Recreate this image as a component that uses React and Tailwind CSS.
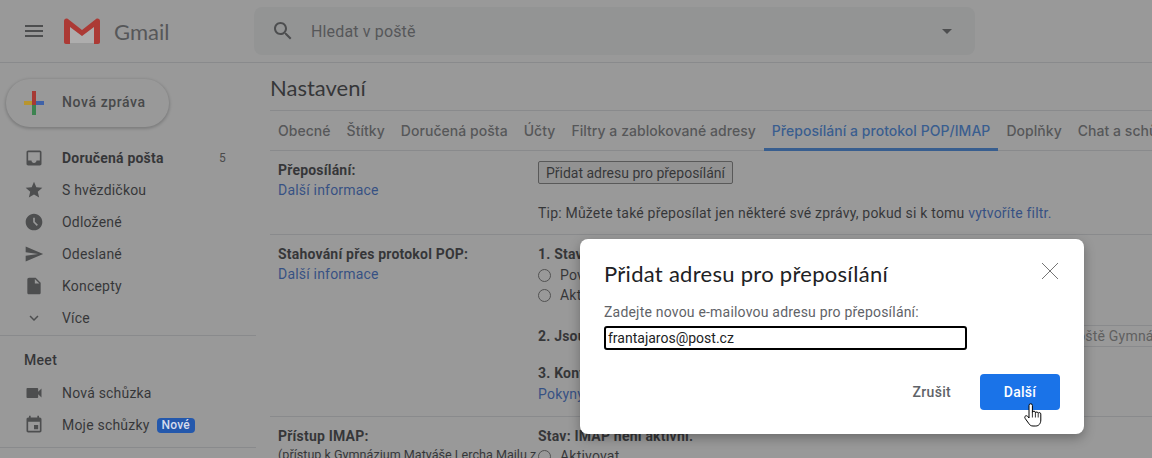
import React from "react";

const Icon = ({ d, className }) => (
  <svg viewBox="0 0 24 24" fill="currentColor" className={className}>
    <path d={d} />
  </svg>
);

const icons = {
  menu: "M3 18h18v-2H3v2zm0-5h18v-2H3v2zm0-7v2h18V6H3z",
  search:
    "M15.5 14h-.79l-.28-.27C15.41 12.59 16 11.11 16 9.5 16 5.91 13.09 3 9.5 3S3 5.91 3 9.5 5.91 16 9.5 16c1.61 0 3.09-.59 4.23-1.57l.27.28v.79l5 4.99L20.49 19l-4.99-5zm-6 0C7.01 14 5 11.99 5 9.5S7.01 5 9.5 5 14 7.01 14 9.5 11.99 14 9.5 14z",
  inbox:
    "M19 3H4.99c-1.11 0-1.98.89-1.98 2L3 19c0 1.1.88 2 1.99 2H19c1.1 0 2-.9 2-2V5c0-1.11-.9-2-2-2zm0 12h-4c0 1.66-1.35 3-3 3s-3-1.34-3-3H4.99V5H19v10z",
  star: "M12 17.27L18.18 21l-1.64-7.03L22 9.24l-7.19-.61L12 2 9.19 8.63 2 9.24l5.46 4.73L5.82 21z",
  clock:
    "M11.99 2C6.47 2 2 6.48 2 12s4.47 10 9.99 10C17.52 22 22 17.52 22 12S17.52 2 11.99 2zm3.3 14.71L11 12.41V7h2v4.59l3.71 3.71-1.42 1.41z",
  send: "M2.01 21L23 12 2.01 3 2 10l15 2-15 2z",
  draft:
    "M6 2c-1.1 0-1.99.9-1.99 2L4 20c0 1.1.89 2 1.99 2H18c1.1 0 2-.9 2-2V8l-6-6H6zm7 7V3.5L18.5 9H13z",
  more: "M16.59 8.59L12 13.17 7.41 8.59 6 10l6 6 6-6z",
  video:
    "M17 10.5V7c0-.55-.45-1-1-1H4c-.55 0-1 .45-1 1v10c0 .55.45 1 1 1h12c.55 0 1-.45 1-1v-3.5l4 4v-11l-4 4z",
  event:
    "M17 12h-5v5h5v-5zM16 1v2H8V1H6v2H5c-1.11 0-1.99.9-1.99 2L3 19c0 1.1.89 2 2 2h14c1.1 0 2-.9 2-2V5c0-1.1-.9-2-2-2h-1V1h-2zm3 18H5V8h14v11z",
};

const mainNav = [
  { icon: "inbox", label: "Doručená pošta", count: "5", bold: true },
  { icon: "star", label: "S hvězdičkou" },
  { icon: "clock", label: "Odložené" },
  { icon: "send", label: "Odeslané" },
  { icon: "draft", label: "Koncepty" },
  { icon: "more", label: "Více", small: true },
];

const tabs = [
  "Obecné",
  "Štítky",
  "Doručená pošta",
  "Účty",
  "Filtry a zablokované adresy",
  "Přeposílání a protokol POP/IMAP",
  "Doplňky",
  "Chat a schůzky",
];

const NavRow = ({ icon, label, count, bold, small, children }) => (
  <div className="flex h-8 items-center text-[14px] tracking-[0.2px] text-[#111318]">
    <div className="flex w-[62px] shrink-0 justify-center pl-[6px] text-[#4a4d50]">
      <Icon d={icons[icon]} className={small ? "w-[18px] h-[18px]" : "w-[20px] h-[20px]"} />
    </div>
    <span className={bold ? "font-bold" : ""}>{label}</span>
    {children}
    {count && <span className="ml-auto mr-[30px] text-xs text-[#444]">{count}</span>}
  </div>
);

const Radio = ({ children }) => (
  <div className="flex h-5 items-center gap-[9px]">
    <span className="h-[13px] w-[13px] shrink-0 rounded-full border border-[#555]" />
    <span>{children}</span>
  </div>
);

const Sidebar = () => (
  <aside className="w-[256px] shrink-0">
    <div className="pt-4 pl-[6px]">
      <div className="flex h-12 w-[163px] items-center rounded-full bg-white shadow-[0_1px_3px_1px_rgba(60,64,67,0.35)]">
        <svg viewBox="0 0 24 24" className="relative z-10 ml-4 h-6 w-6">
          <path d="M2 10h8v4H2z" fill="#b8952f" />
          <path d="M14 14h8v-4h-8z" fill="#3f62a8" />
          <path d="M10 14h4v10h-4z" fill="#3d8350" />
          <path d="M14 0h-4v14h4z" fill="#a63a34" />
        </svg>
        <span className="ml-4 pb-[1px] text-[14px] font-medium tracking-[0.6px] text-[#3c4043]">Nová zpráva</span>
      </div>
    </div>
    <div className="mt-[15px]">
      {mainNav.map((item) => (
        <NavRow key={item.label} {...item} />
      ))}
    </div>
    <div className="mt-[1px] border-t border-[#dadce0] pt-[15px]">
      <div className="pl-6 text-[14px] font-medium leading-[18px] tracking-[0.3px] text-[#111318]">Meet</div>
      <div className="mt-[8px]">
        <NavRow icon="video" label="Nová schůzka" />
        <NavRow icon="event" label="Moje schůzky">
          <span className="relative z-10 ml-[7px] rounded-[4px] bg-[#2458ac] px-[5px] text-[12px] leading-[15px] font-medium tracking-[0.2px] text-[#d5dcec]">
            Nové
          </span>
        </NavRow>
      </div>
      <div className="mt-[6px] border-t border-[#dadce0]" />
    </div>
  </aside>
);

const Settings = () => (
  <main className="min-w-0 flex-1 pl-[14px] text-[14px] leading-5 tracking-[0.2px] text-[#111318]">
    <h1 className="h-[48px] border-b border-[#dadce0] pt-[9px] font-['Lato',sans-serif] text-[22px] leading-[32px] font-normal tracking-normal">
      Nastavení
    </h1>
    <nav className="flex h-[40px] items-stretch whitespace-nowrap border-b border-[#dadce0] tracking-[0.04px]">
      {tabs.map((t, i) => (
        <div
          key={t}
          className={
            i === 5
              ? "-mb-px flex items-center border-b-[3px] border-[#1a73e8] px-2 pt-[3px] font-['Inter',sans-serif] text-[14px] font-medium text-[#1a73e8]"
              : "flex items-center px-2 font-['Inter',sans-serif] text-[14px] font-medium text-[#5f6368]"
          }
        >
          {t}
        </div>
      ))}
    </nav>

    <section className="flex h-[84px] border-b border-[#dadce0] pt-[9px] pl-2 whitespace-nowrap">
      <div className="w-[260px] shrink-0">
        <div className="font-bold">Přeposílání:</div>
        <a className="text-[#1155cc]">Další informace</a>
      </div>
      <div>
        <button className="mt-[1px] h-[23px] w-[195px] rounded-[2px] border border-[#666] bg-[#efefef] leading-none tracking-normal">
          Přidat adresu pro přeposílání
        </button>
        <p className="mt-[19px]">
          Tip: Můžete také přeposílat jen některé své zprávy, pokud si k tomu{" "}
          <a className="text-[#1155cc]">vytvoříte filtr.</a>
        </p>
      </div>
    </section>

    <section className="flex h-[182px] border-b border-[#dadce0] pt-[9px] pl-2 whitespace-nowrap">
      <div className="w-[260px] shrink-0">
        <div className="font-bold">Stahování přes protokol POP:</div>
        <a className="text-[#1155cc]">Další informace</a>
      </div>
      <div>
        <div className="font-bold">1. Stav: POP je deaktivován</div>
        <div className="mt-[1px]">
          <Radio>Povolit POP pro všechny zprávy</Radio>
          <Radio>Aktivovat POP pro zprávy, které od nynějška přijmete</Radio>
        </div>
        <div className="mt-[21px] flex h-5 items-center">
          <span className="w-[354px] font-bold">2. Jsou-li zprávy přístupné přes POP</span>
          <span className="border border-[#dadce0] px-1 text-[#777]">
            ponechat kopii v doručené poště Gymnázium Matyáše Lercha
          </span>
        </div>
        <div className="mt-[17px] font-bold">3. Konfigurujte e-mailového klienta</div>
        <a className="mt-[1px] block text-[#1155cc]">Pokyny ke konfiguraci</a>
      </div>
    </section>

    <section className="flex pt-[9px] pl-2 whitespace-nowrap">
      <div className="w-[260px] shrink-0 overflow-hidden">
        <div className="font-bold">Přístup IMAP:</div>
        <div className="text-[12.6px] leading-[18px] tracking-normal">(přístup k Gymnázium Matyáše Lercha Mailu z</div>
      </div>
      <div>
        <div className="font-bold">Stav: IMAP není aktivní.</div>
        <Radio>Aktivovat</Radio>
      </div>
    </section>
  </main>
);

const Dialog = () => (
  <div className="absolute left-[580px] top-[239px] h-[195px] w-[504px] rounded-lg bg-white px-6 pt-[19px] shadow-[0_4px_12px_rgba(0,0,0,0.3)]">
    <div className="flex items-center justify-between">
      <h2 className="font-['Lato',sans-serif] text-[22px] leading-[32px] tracking-[0.28px] text-[#202124]">
        Přidat adresu pro přeposílání
      </h2>
      <svg viewBox="0 0 16 16" className="mr-[2px] mb-[6px] h-4 w-4 text-[#757575]" fill="none" stroke="currentColor" strokeWidth="1">
        <path d="M0 0l16 16M16 0L0 16" />
      </svg>
    </div>
    <p className="mt-[12px] text-[14px] leading-5 tracking-[0.2px] text-[#5f6368]">
      Zadejte novou e-mailovou adresu pro přeposílání:
    </p>
    <input
      readOnly
      value="frantajaros@post.cz"
      className="mt-[4px] block h-6 w-[363px] rounded-[3px] border-2 border-black px-[2px] text-[14px] text-[#202124] outline-none"
    />
    <div className="mt-[24px] flex items-center justify-end">
      <button className="mr-[29px] text-[14px] font-medium tracking-[0.3px] text-[#5f6368]">Zrušit</button>
      <button className="h-9 w-20 rounded bg-[#1a73e8] text-[14px] font-medium tracking-[0.3px] text-white">Další</button>
    </div>
    <svg viewBox="0 0 18 24" className="absolute left-[444px] top-[164px] h-6 w-[18px]">
      <path
        d="M5 2.500a1.700 1.700 0 0 1 3.400 0V9.500a1.500 1.500 0 0 1 3 .3 1.500 1.500 0 0 1 2.800.5 1.400 1.400 0 0 1 2.600.8V17c0 3.500-2 6-5 6H9c-2 0-3-.8-4-2.200L1.200 15.500c-.8-1.100-.4-2.200.4-2.600.8-.4 1.700-.1 2.300.700L5 15z"
        fill="#fff"
        stroke="#000"
        strokeWidth="1"
      />
      <path d="M8.400 9.500v5M11.400 10v4.500M14.200 10.500v4" fill="none" stroke="#000" strokeWidth="0.8" />
    </svg>
  </div>
);

export default function App() {
  return (
    <div className="relative h-[458px] w-[1152px] overflow-hidden bg-white font-['Roboto',sans-serif]">
      <header className="flex h-[63px] items-center border-b border-[#dadce0]">
        <div className="flex w-[254px] shrink-0 items-center">
          <Icon d={icons.menu} className="ml-[22px] h-6 w-6 text-[#4a4d50]" />
          <svg viewBox="0 0 36 26" className="relative z-10 ml-[18px] h-[26px] w-9">
            <path d="M3 2l15 12L33 2v23H3z" fill="#aeadad" />
            <path d="M0 3c0-2 2-3 4-2l14 11L32 1c2-1 4 0 4 2v21c0 1-.8 2-2 2h-4V9L18 18 6 9v17H2c-1.200 0-2-1-2-2z" fill="#ac3a35" />
          </svg>
          <span className="ml-[14px] font-['Lato',sans-serif] text-[22px] text-[#5f6368]">Gmail</span>
        </div>
        <div className="flex h-12 w-[721px] items-center rounded-lg bg-[#f1f3f4] pl-[17px]">
          <Icon d={icons.search} className="h-6 w-6 text-[#4a4d50]" />
          <span className="ml-4 pt-[1px] text-[16px] tracking-[0.15px] text-[#5f6368]">Hledat v poště</span>
          <span className="ml-auto mr-[23px] h-0 w-0 border-x-[5px] border-t-[5px] border-x-transparent border-t-[#4a4d50]" />
        </div>
      </header>
      <div className="flex">
        <Sidebar />
        <Settings />
      </div>
      <div className="absolute inset-0 bg-[#4f4f4f]/[0.58]" />
      <Dialog />
    </div>
  );
}
